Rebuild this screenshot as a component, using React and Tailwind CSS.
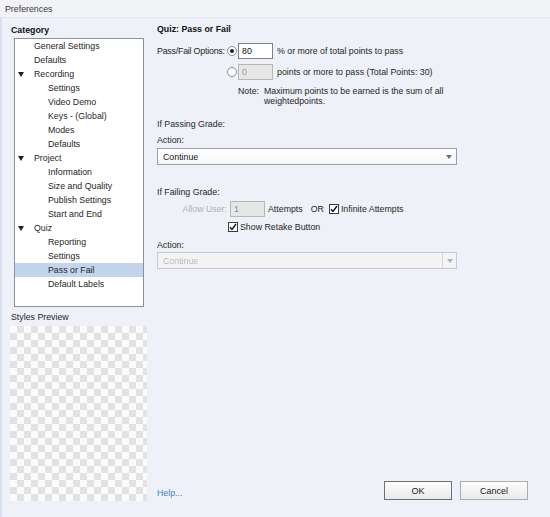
import React from 'react'

const TREE = [
  { label: 'General Settings', level: 0 },
  { label: 'Defaults', level: 0 },
  { label: 'Recording', level: 0, open: true },
  { label: 'Settings', level: 1 },
  { label: 'Video Demo', level: 1 },
  { label: 'Keys - (Global)', level: 1 },
  { label: 'Modes', level: 1 },
  { label: 'Defaults', level: 1 },
  { label: 'Project', level: 0, open: true },
  { label: 'Information', level: 1 },
  { label: 'Size and Quality', level: 1 },
  { label: 'Publish Settings', level: 1 },
  { label: 'Start and End', level: 1 },
  { label: 'Quiz', level: 0, open: true },
  { label: 'Reporting', level: 1 },
  { label: 'Settings', level: 1 },
  { label: 'Pass or Fail', level: 1, selected: true },
  { label: 'Default Labels', level: 1 },
]

function Arrow({ color = '#6b6f78' }) {
  return (
    <svg width="6" height="4" viewBox="0 0 6 4" className="block">
      <path d="M0 0H6L3 4Z" fill={color} />
    </svg>
  )
}

function TreeRow({ item }) {
  return (
    <div className={`flex items-center h-[14px] leading-[14px] ${item.selected ? 'bg-[#c3d4ef]' : ''}`}>
      {item.level === 0 ? (
        <div className="w-[19px] flex items-center">
          {item.open && (
            <svg width="6" height="5" viewBox="0 0 6 5" className="ml-[3px] block">
              <path d="M0 0H6L3 5Z" fill="#1f1f1f" />
            </svg>
          )}
        </div>
      ) : (
        <div className="w-[33px]" />
      )}
      <span>{item.label}</span>
    </div>
  )
}

function Radio({ checked }) {
  return (
    <div className="w-[10px] h-[10px] rounded-full border border-[#8a8e98] bg-white flex items-center justify-center">
      {checked && <div className="w-[4px] h-[4px] rounded-full bg-[#1f1f1f]" />}
    </div>
  )
}

function Check() {
  return (
    <div className="w-[10px] h-[10px] border border-[#3c3c3c] bg-white flex items-center justify-center">
      <svg width="8" height="8" viewBox="0 0 8 8" className="block">
        <path d="M1 4.2L3 6.4L7 1" stroke="#111" strokeWidth="1.4" fill="none" />
      </svg>
    </div>
  )
}

export default function App() {
  return (
    <div className="w-[550px] h-[517px] bg-[#eef1f7] text-[#262626] text-[8.8px] leading-[12px] whitespace-nowrap flex flex-col overflow-hidden" style={{ fontFamily: '"Liberation Sans", Arial, sans-serif' }}>
      <div className="h-[18px] shrink-0 bg-[#f2f3f7] border-b border-[#e1e5ee] pl-[5px] flex items-center text-[#3a3a3a]">
        Preferences
      </div>
      <div className="flex flex-1 border-l-2 border-[#d8e1f1]">
        {/* left column */}
        <div className="w-[155px] shrink-0 flex flex-col">
          <div className="mt-[6px] pl-[9px] font-bold text-[#111]">Category</div>
          <div className="mt-[2px] ml-[12px] w-[130px] h-[269px] border border-[#8c9099] bg-white">
            {TREE.map((item, i) => (
              <TreeRow key={i} item={item} />
            ))}
          </div>
          <div className="mt-[4px] pl-[9px]">Styles Preview</div>
          <div className="mt-[3px] ml-[8px] w-[137px] h-[175px] bg-[image:conic-gradient(#e2e2e2_25%,#fbfbfb_0_50%,#e2e2e2_0_75%,#fbfbfb_0)] bg-[length:14px_14px]" />
        </div>

        {/* right column */}
        <div className="flex-1 flex flex-col">
          <div className="mt-[5px] font-bold text-[#111]">Quiz: Pass or Fail</div>

          <div className="mt-[8px] h-[16px] flex items-center">
            <span className="w-[70px] shrink-0 tracking-[-0.2px]">Pass/Fail Options:</span>
            <Radio checked />
            <div className="ml-[1px] w-[35px] h-[16px] border border-[#7d818b] bg-white pl-[3px] flex items-center text-[#111]">80</div>
            <span className="ml-[4px]">% or more of total points to pass</span>
          </div>

          <div className="mt-[5px] h-[16px] flex items-center pl-[70px]">
            <Radio />
            <div className="ml-[1px] w-[35px] h-[16px] border border-[#b4b6ba] bg-[#e6e6e6] pl-[3px] flex items-center text-[#9a9a9a]">0</div>
            <span className="ml-[4px]">points or more to pass (Total Points: 30)</span>
          </div>

          <div className="mt-[6px] pl-[81px] flex leading-[10px]">
            <span className="w-[26px]">Note:</span>
            <span>
              Maximum points to be earned is the sum of all
              <br />
              weightedpoints.
            </span>
          </div>

          <div className="mt-[12px]">If Passing Grade:</div>
          <div className="mt-[4px]">Action:</div>
          <div className="mt-[2px] w-[300px] h-[17px] border border-[#9a9ea7] bg-linear-to-b from-white to-[#f6f6f6] flex items-center justify-between pl-[5px] pr-[4px] text-[#1a1a1a]">
            <span>Continue</span>
            <Arrow />
          </div>

          <div className="mt-[21px]">If Failing Grade:</div>
          <div className="mt-[3px] h-[16px] flex items-center">
            <span className="w-[70px] text-right text-[#aeb0b4]">Allow User:</span>
            <div className="ml-[3px] w-[35px] h-[16px] border border-[#b4b6ba] bg-[#e6e6e6] pl-[3px] flex items-center text-[#8a8a8a]">1</div>
            <span className="ml-[3px]">Attempts</span>
            <span className="ml-[8px]">OR</span>
            <div className="ml-[5px]"><Check /></div>
            <span className="ml-[2px]">Infinite Attempts</span>
          </div>
          <div className="mt-[4px] h-[12px] flex items-center pl-[71px]">
            <Check />
            <span className="ml-[2px]">Show Retake Button</span>
          </div>

          <div className="mt-[6px]">Action:</div>
          <div className="mt-[1px] w-[300px] h-[17px] border border-[#c6cad2] bg-[#f4f4f5] flex items-center text-[#b9bbbf]">
            <span className="flex-1 pl-[5px]">Continue</span>
            <div className="h-full w-[14px] border-l border-[#d4d6da] flex items-center justify-center">
              <Arrow color="#b0b3b8" />
            </div>
          </div>

          <div className="mt-auto mb-[17px] flex items-center justify-between pr-[22px]">
            <a className="mt-[4px] text-[#3d82cc]">Help...</a>
            <div className="flex gap-[8px]">
              <button className="w-[68px] h-[19px] border border-[#6c6f76] bg-linear-to-b from-[#fdfdfd] to-[#eaeaea] text-[#1a1a1a] text-[9px]">OK</button>
              <button className="w-[68px] h-[19px] border border-[#a9acb2] bg-linear-to-b from-[#fdfdfd] to-[#eaeaea] text-[#1a1a1a] text-[9px]">Cancel</button>
            </div>
          </div>
        </div>
      </div>
    </div>
  )
}
